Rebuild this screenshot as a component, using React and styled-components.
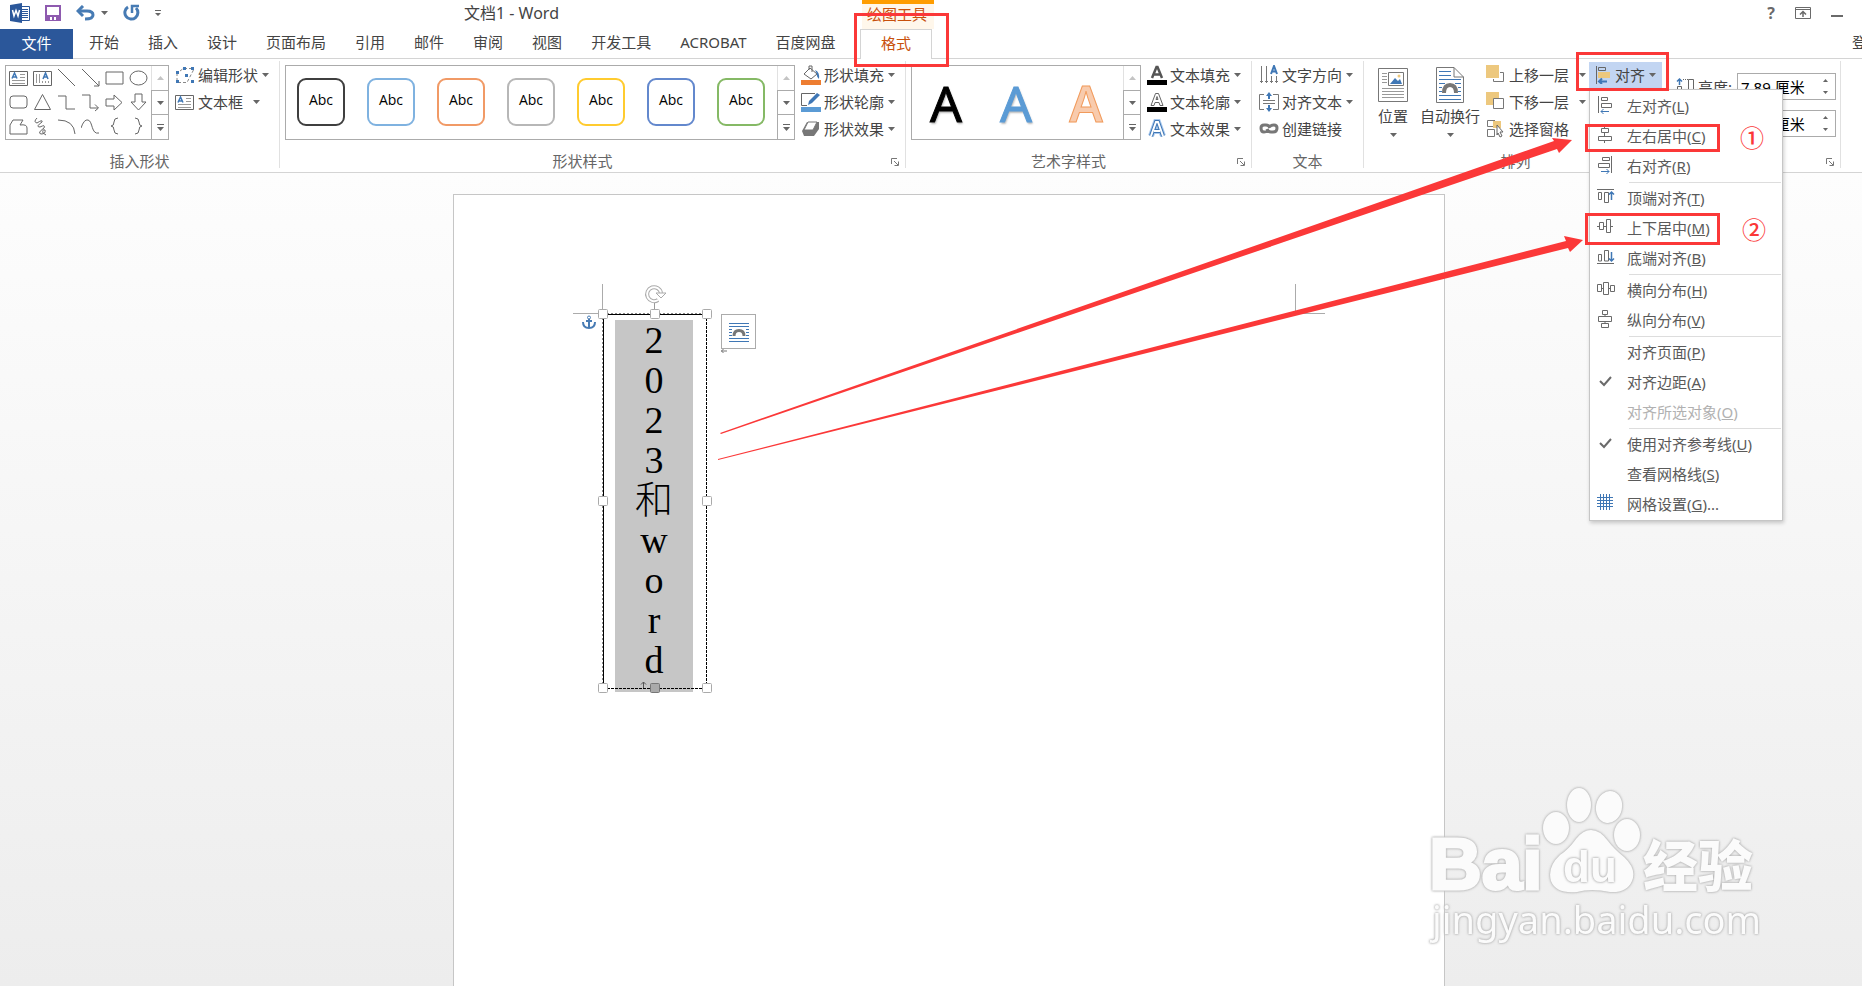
import React from "react";
import styled, { createGlobalStyle } from "styled-components";

const RED = "#fb3838";

const tabs = [
  "开始",
  "插入",
  "设计",
  "页面布局",
  "引用",
  "邮件",
  "审阅",
  "视图",
  "开发工具",
  "ACROBAT",
  "百度网盘",
];

const shapeStyles = [
  "#3f3f3f",
  "#7fb2e0",
  "#f19a66",
  "#b7b7b7",
  "#ffcb2f",
  "#6388cd",
  "#85b965",
];

const shapes = [
  { name: "横排文本框", kind: "textH" },
  { name: "竖排文本框", kind: "textV" },
  { name: "直线", d: "M1 0 L18 17" },
  { name: "箭头", d: "M1 0 L18 17 M18 12 V17 H13" },
  { name: "矩形", d: "M1 3 H18 V15 H1 Z" },
  { name: "椭圆", d: "M1 9 A8.5 7 0 0 1 18 9 A8.5 7 0 0 1 1 9 Z" },
  { name: "圆角矩形", d: "M4 3 H15 Q18 3 18 6 V12 Q18 15 15 15 H4 Q1 15 1 12 V6 Q1 3 4 3 Z" },
  { name: "三角形", d: "M9.5 1.5 L17.5 16.5 H1.5 Z" },
  { name: "肘形连接符", d: "M1 3 H9 V16 H18" },
  { name: "肘形箭头", d: "M1 2 H9 V15 H17 M14 11.5 L17.5 15 L14 18" },
  { name: "右箭头", d: "M1 6 H9 V2 L17 9.5 L9 17 V13 H1 Z" },
  { name: "下箭头", d: "M6 1 H13 V9 H17 L9.5 17 L2 9 H6 Z" },
  { name: "任意多边形", d: "M4 3 H14 L11 8 Q18 7 18 11 V17 H1 V8 Z" },
  { name: "自由曲线", d: "M4 1 Q0 5 4 6 Q10 2 9 5 Q2 10 7 10 Q13 7 11 11 Q4 16 8 17 Q13 17 12 13 Q9 12 10 16 L13 18" },
  { name: "弧形", d: "M1 3 Q17 3 18 17" },
  { name: "曲线", d: "M0 11 Q3 2 7 3 C12 4 10 18 18 16" },
  { name: "左大括号", d: "M13 1 Q9 1 9 5 Q9 9 6 9 Q9 9 9 13 Q9 17 13 17" },
  { name: "右大括号", d: "M6 1 Q10 1 10 5 Q10 9 13 9 Q10 9 10 13 Q10 17 6 17" },
];

const menuItems = [
  { text: "左对齐", hot: "L", icon: "left" },
  { text: "左右居中", hot: "C", icon: "center" },
  { text: "右对齐", hot: "R", icon: "right" },
  null,
  { text: "顶端对齐", hot: "T", icon: "top" },
  { text: "上下居中", hot: "M", icon: "middle" },
  { text: "底端对齐", hot: "B", icon: "bottom" },
  null,
  { text: "横向分布", hot: "H", icon: "distH" },
  { text: "纵向分布", hot: "V", icon: "distV" },
  null,
  { text: "对齐页面", hot: "P" },
  { text: "对齐边距", hot: "A", icon: "check" },
  { text: "对齐所选对象", hot: "O", disabled: true },
  null,
  { text: "使用对齐参考线", hot: "U", icon: "check" },
  { text: "查看网格线", hot: "S" },
  { text: "网格设置", hot: "G", tail: "...", icon: "grid" },
];

const menuIcons = {
  left: (
    <>
      <path d="M1.5 0 V17 M4.5 1.5 H10.5 V4.5 H4.5 Z M4.5 7.5 H14.5 V11.5 H4.5 Z" />
      <path className="blue" d="M12 15.5 H4 M6.5 13 L4 15.5 L6.5 18" />
    </>
  ),
  center: (
    <path d="M7.5 0 V2 M4.5 2.5 H11.5 V6.5 H4.5 Z M7.5 7 V10 M1.5 10.5 H14.5 V14.5 H1.5 Z M7.5 15 V17" />
  ),
  right: (
    <>
      <path d="M14.5 0 V17 M5.5 1.5 H12.5 V4.5 H5.5 Z M1.5 7.5 H12.5 V11.5 H1.5 Z" />
      <path className="blue" d="M4 15.5 H12 M9.5 13 L12 15.5 L9.5 18" />
    </>
  ),
  top: (
    <>
      <path d="M0 1.5 H17 M1.5 4.5 H4.5 V11.5 H1.5 Z M7.5 4.5 H11.5 V14.5 H7.5 Z" />
      <path className="blue" strokeWidth="1.5" d="M14.5 12 V4 M12 6.5 L14.5 4 L17 6.5" />
    </>
  ),
  middle: (
    <path d="M0 8.5 H2 M2.5 4.5 H6.5 V11.5 H2.5 Z M7 8.5 H9 M9.5 1.5 H13.5 V14.5 H9.5 Z M14 8.5 H16" />
  ),
  bottom: (
    <>
      <path d="M0 15.5 H17 M1.5 6.5 H4.5 V13 H1.5 Z M7.5 2.5 H11.5 V13 H7.5 Z" />
      <path className="blue" strokeWidth="1.5" d="M14.5 4 V13 M12 10.5 L14.5 13 L17 10.5" />
    </>
  ),
  distH: (
    <path d="M0.5 4.5 H4.5 V11.5 H0.5 Z M4.5 8.5 H6.5 M6.5 2.5 H11.5 V14.5 H6.5 Z M11.5 8.5 H13.5 M13.5 5.5 H17.5 V11.5 H13.5 Z" />
  ),
  distV: (
    <path d="M5.5 0.5 H10.5 V4.5 H5.5 Z M8 4.5 V6.5 M1.5 6.5 H14.5 V11.5 H1.5 Z M8 11.5 V13.5 M4.5 13.5 H11.5 V17.5 H4.5 Z" />
  ),
  check: <path d="M3 9 L7 13 L14 5" strokeWidth="2" />,
  grid: (
    <path
      className="blue"
      d="M3.5 0 V16 M6.5 0 V16 M9.5 0 V16 M12.5 0 V16 M0 3.5 H16 M0 6.5 H16 M0 9.5 H16 M0 12.5 H16"
    />
  ),
};

function Caret() {
  return (
    <CaretIcon viewBox="0 0 7 4" aria-hidden="true">
      <path d="M0 0 H7 L3.5 4 Z" />
    </CaretIcon>
  );
}

function Launcher() {
  return (
    <LauncherButton aria-label="更多选项">
      <svg width="8" height="8" viewBox="0 0 8 8" fill="none" stroke="#777">
        <path d="M0.5 6 V0.5 H6" />
        <path d="M3 3 L7 7 M7.5 3.5 V7.5 H3.5" />
      </svg>
    </LauncherButton>
  );
}

function GalleryScroll() {
  return (
    <ScrollColumn>
      <ScrollButton aria-label="上一行" $faded>
        <svg width="7" height="4" viewBox="0 0 7 4">
          <path d="M0 4 H7 L3.5 0 Z" fill="#c4c4c4" />
        </svg>
      </ScrollButton>
      <ScrollButton aria-label="下一行">
        <Caret />
      </ScrollButton>
      <ScrollButton aria-label="其他">
        <svg width="7" height="7" viewBox="0 0 7 7" fill="#666">
          <path d="M0 0 H7 V1 H0 Z M0 3 H7 L3.5 7 Z" />
        </svg>
      </ScrollButton>
    </ScrollColumn>
  );
}

function Command({ icon, children, caret, split }) {
  return (
    <CommandButton $split={split}>
      <svg width="20" height="20" viewBox="0 0 20 20" fill="none">
        {icon}
      </svg>
      <span>{children}</span>
      {caret && <Caret />}
    </CommandButton>
  );
}

function RibbonGroup({ width, label, launcher, pad = 5, children }) {
  return (
    <Group $width={width}>
      <GroupBody $pad={pad}>{children}</GroupBody>
      <GroupFooter $launcher={launcher}>
        <span>{label}</span>
        {launcher && <Launcher />}
      </GroupFooter>
    </Group>
  );
}

function ShapeIcon({ shape }) {
  if (shape.kind) {
    const vertical = shape.kind === "textV";
    return (
      <svg width="19" height="18" viewBox="0 0 19 18" fill="none" stroke="#666">
        <path d="M0.5 2.5 H18.5 V16.5 H0.5 Z" />
        <path
          stroke="#999"
          d={
            vertical
              ? "M3.5 5 V14 M6.5 5 V14 M9.5 12 V14 M12.5 12 V14 M15.5 12 V14"
              : "M11 5.5 H16 M11 8.5 H16 M3 11.5 H16 M3 14.5 H16"
          }
        />
        <path
          stroke="#3f77b5"
          strokeWidth="1.5"
          d={vertical ? "M10 10 L12.5 4 L15 10 M11 8 H14" : "M3 9.5 L5.5 4 L8 9.5 M4 8 H7"}
        />
      </svg>
    );
  }
  return (
    <svg width="19" height="19" viewBox="0 0 19 19" fill="none" stroke="#666">
      <path d={shape.d} />
    </svg>
  );
}

function AlignMenu() {
  return (
    <Menu role="menu">
      {menuItems.map((item, i) =>
        item ? (
          <MenuItem key={item.hot} role="menuitem" disabled={item.disabled}>
            <svg width="18" height="18" viewBox="0 0 18 18" fill="none" stroke="#6a6a6a">
              {menuIcons[item.icon]}
            </svg>
            <span>
              {item.text}(<u>{item.hot}</u>){item.tail}
            </span>
          </MenuItem>
        ) : (
          <MenuLine key={i} />
        )
      )}
    </Menu>
  );
}

function SizeField({ name, value, children }) {
  return (
    <Spinner>
      {children}
      <input id={name} aria-label={name} defaultValue={value} />
      <div>
        <button aria-label="增大">
          <svg width="5" height="3" viewBox="0 0 5 3">
            <path d="M0 3 H5 L2.5 0 Z" fill="#666" />
          </svg>
        </button>
        <button aria-label="减小">
          <svg width="5" height="3" viewBox="0 0 5 3">
            <path d="M0 0 H5 L2.5 3 Z" fill="#666" />
          </svg>
        </button>
      </div>
    </Spinner>
  );
}

function TitleBar() {
  return (
    <TitleRow>
      <QuickAccess>
        <svg width="20" height="20" viewBox="0 0 20 20">
          <path d="M10 3.5 H19.5 V17.5 H10" fill="#fff" stroke="#2b579a" />
          <path d="M12 6.5 H18 M12 8.5 H18 M12 10.5 H18 M12 12.5 H18 M12 14.5 H18" stroke="#2b579a" />
          <path d="M0 2 L12 0 V20 L0 18 Z" fill="#2b579a" />
          <path d="M2.5 7 L4 13 L6 7.5 L8 13 L9.5 7" fill="none" stroke="#fff" strokeWidth="1.5" />
        </svg>
        <QuickButton aria-label="保存">
          <svg width="16" height="16" viewBox="0 0 16 16" fill="none" stroke="#8e5aaf" strokeWidth="2">
            <path d="M1 1 H15 V15 H1 Z" />
            <path d="M2 10 H14 V15 H2 Z" fill="#8e5aaf" stroke="none" />
            <path d="M5 12 H7 V15 H5 Z M9 12 H11 V15 H9 Z" fill="#fff" stroke="none" />
          </svg>
        </QuickButton>
        <QuickButton aria-label="撤消">
          <svg width="19" height="16" viewBox="0 0 19 16" fill="none" stroke="#477bb4" strokeWidth="3">
            <path d="M2 6 H11 Q17 6 17 10 Q17 14 9 14" />
            <path d="M7 1 L2 6 L7 11" />
          </svg>
          <Caret />
        </QuickButton>
        <QuickButton aria-label="重复">
          <svg width="17" height="17" viewBox="0 0 17 17" fill="none" stroke="#477bb4" strokeWidth="3">
            <path d="M5 3 A6.5 6.5 0 1 0 13 4" />
            <path d="M9 9 V2 H16" strokeWidth="2.5" />
          </svg>
        </QuickButton>
        <QuickButton aria-label="自定义快速访问工具栏">
          <svg width="6" height="6" viewBox="0 0 6 6" fill="#666">
            <path d="M0 0 H6 V1 H0 Z M0 3 H6 L3 6 Z" />
          </svg>
        </QuickButton>
      </QuickAccess>
      <DocTitle>文档1 - Word</DocTitle>
      <ToolContext>绘图工具</ToolContext>
      <WindowButtons>
        <button aria-label="帮助">?</button>
        <button aria-label="功能区显示选项">
          <svg width="16" height="12" viewBox="0 0 16 12" fill="none" stroke="#6a6a6a">
            <path d="M0.5 0.5 H15.5 V11.5 H0.5 Z M1 2.5 H15" />
            <path d="M8 10 V5 M5 7.5 L8 4.5 L11 7.5" strokeWidth="1.5" />
          </svg>
        </button>
        <button aria-label="最小化">
          <svg width="12" height="12" viewBox="0 0 12 12">
            <path d="M0 8 H12 V10 H0 Z" fill="#6a6a6a" />
          </svg>
        </button>
      </WindowButtons>
    </TitleRow>
  );
}

function Ribbon() {
  return (
    <RibbonBar>
      <RibbonGroup width={280} label="插入形状">
        <Gallery $width={164}>
          <ShapeGrid>
            {shapes.map((shape) => (
              <button key={shape.name} aria-label={shape.name}>
                <ShapeIcon shape={shape} />
              </button>
            ))}
          </ShapeGrid>
          <GalleryScroll />
        </Gallery>
        <CommandColumn>
          <Command
            caret
            icon={
              <>
                <path d="M9 3.5 H18 M2 8 V18 M3 17.5 H12 L19 4 M5 6 L9 3" stroke="#888" strokeDasharray="3 2" />
                <path
                  d="M8 2 H11 V5 H8 Z M16 2 H19 V5 H16 Z M1 6 H4 V9 H1 Z M1 15 H4 V18 H1 Z M10 9 H13 V12 H10 Z M16 15 H19 V18 H16 Z"
                  fill="#3f77b5"
                />
              </>
            }
          >
            编辑形状
          </Command>
          <Command
            caret
            split
            icon={
              <>
                <path d="M0.5 3.5 H18.5 V17.5 H0.5 Z" stroke="#666" />
                <path d="M11 6.5 H16 M11 9.5 H16 M3 12.5 H16 M3 15.5 H16" stroke="#999" />
                <path d="M3 10.5 L5.5 5 L8 10.5 M4 9 H7" stroke="#3f77b5" strokeWidth="1.5" />
              </>
            }
          >
            文本框
          </Command>
        </CommandColumn>
      </RibbonGroup>

      <RibbonGroup width={626} label="形状样式" launcher>
        <Gallery $width={510}>
          <StyleRow>
            {shapeStyles.map((color) => (
              <StyleTile key={color} $color={color}>
                Abc
              </StyleTile>
            ))}
          </StyleRow>
          <GalleryScroll />
        </Gallery>
        <CommandColumn>
          <Command
            caret
            icon={
              <>
                <path d="M0 15 H20 V20 H0 Z" fill="#ed7d31" />
                <path d="M9 3 L16 9 L10 14 L3 9 Z M8 5 V1 H11 V7" stroke="#666" />
                <path d="M14 5 Q19 7 18 14 Q15 11 16 9 Z" fill="#3f77b5" />
              </>
            }
          >
            形状填充
          </Command>
          <Command
            caret
            icon={
              <>
                <path d="M0 15 H20 V20 H0 Z" fill="#5b9bd5" />
                <path d="M14 1.5 H0.5 V13.5 H6" stroke="#666" />
                <path d="M7 13 L8 9 L16 1 L19 3 L11 11 Z" fill="#3f77b5" />
              </>
            }
          >
            形状轮廓
          </Command>
          <Command
            caret
            icon={
              <>
                <path d="M1 12 L6 3 H18 V10 L13 17 H3 Z" fill="#777" />
                <path d="M7 3 H16 L12 11 H3 Z" fill="#fff" stroke="#777" />
              </>
            }
          >
            形状效果
          </Command>
        </CommandColumn>
      </RibbonGroup>

      <RibbonGroup width={346} label="艺术字样式" launcher>
        <Gallery $width={230}>
          <WordArtRow>
            <WordArt $color="#000">A</WordArt>
            <WordArt $color="#5b9bd5">A</WordArt>
            <WordArt $color="#f8cbad" $outline="#f19a5b">
              A
            </WordArt>
          </WordArtRow>
          <GalleryScroll />
        </Gallery>
        <CommandColumn>
          <Command
            caret
            icon={
              <>
                <path d="M0 15 H20 V20 H0 Z" fill="#000" />
                <path d="M5 13 L9.5 2 H10.5 L15 13 M6.5 9.5 H13.5" stroke="#555" strokeWidth="2.5" />
              </>
            }
          >
            文本填充
          </Command>
          <Command
            caret
            icon={
              <>
                <path d="M0 15 H20 V20 H0 Z" fill="#000" />
                <path d="M4 13.5 L8.5 1.5 H11.5 L16 13.5 H13 L12 10.5 H8 L7 13.5 Z M9 7.5 L10 4.5 L11 7.5 Z" stroke="#666" />
              </>
            }
          >
            文本轮廓
          </Command>
          <Command
            caret
            icon={
              <>
                <path d="M4 17 L9 3 H11 L16 17 M7 12 H13" stroke="#a9c9ee" strokeWidth="6" />
                <path d="M4 17 L9 3 H11 L16 17 M7 12 H13" stroke="#3f77b5" strokeWidth="4" />
                <path d="M4 17 L9 3 H11 L16 17 M7 12 H13" stroke="#fff" strokeWidth="2" />
              </>
            }
          >
            文本效果
          </Command>
        </CommandColumn>
      </RibbonGroup>

      <RibbonGroup width={112} label="文本" pad={7}>
        <CommandColumn>
          <Command
            caret
            icon={
              <>
                <path d="M2.5 1 V18 M7.5 1 V18 M12.5 11 V18 M17.5 11 V18" stroke="#777" />
                <path d="M1 16.5 H4 M6 16.5 H9 M11 16.5 H14 M16 16.5 H19" stroke="#777" />
                <path d="M12 9 L15 1 L18 9 M13 6.5 H17" stroke="#3f77b5" strokeWidth="2" />
              </>
            }
          >
            文字方向
          </Command>
          <Command
            caret
            icon={
              <>
                <path d="M5 2.5 H0.5 V17.5 H5 M14 2.5 H19.5 V17.5 H14 M4 8.5 H16 M4 11.5 H16" stroke="#777" />
                <path d="M10 0 L13 4 H11 V7 H9 V4 H7 Z M10 20 L13 16 H11 V13 H9 V16 H7 Z" fill="#3f77b5" />
              </>
            }
          >
            对齐文本
          </Command>
          <Command
            icon={
              <path
                d="M9 12 Q7 13 5 13 Q2 13 2 9 Q2 6 5 6 H7 Q10 6 11 9 M11 7 Q13 6 15 6 Q18 6 18 9 Q18 13 14 13 H12 Q9 13 8 10"
                stroke="#777"
                strokeWidth="3"
              />
            }
          >
            创建链接
          </Command>
        </CommandColumn>
      </RibbonGroup>

      <RibbonGroup width={304} label="排列" pad={14}>
        <BigButtons>
          <BigButton>
            <svg width="30" height="36" viewBox="0 0 30 36" fill="none" stroke="#777">
              <path d="M0.5 1.5 H29.5 V34.5 H0.5 Z M10.5 5.5 H25.5 V18.5 H10.5 Z" />
              <path d="M4 6.5 H9 M4 9.5 H9 M4 12.5 H9 M4 15.5 H9 M4 21.5 H26 M4 24.5 H26 M4 27.5 H26 M4 30.5 H26" stroke="#999" />
              <path d="M12 17 L17 11 L20 14 L22 12 L24 17 Z" fill="#3f77b5" stroke="none" />
              <circle cx="21" cy="9" r="1.5" fill="#edc87e" stroke="none" />
            </svg>
            <span>位置</span>
            <Caret />
          </BigButton>
          <BigButton>
            <svg width="28" height="36" viewBox="0 0 28 36" fill="none" stroke="#777">
              <path d="M0.5 0.5 H18 L27.5 10 V35.5 H0.5 Z M18 0.5 V10 H27.5" />
              <path d="M3 4.5 H15 M3 8.5 H15 M3 12.5 H25 M3 16.5 H9 M19 16.5 H25 M3 20.5 H6 M22 20.5 H25 M3 24.5 H6 M22 24.5 H25 M3 28.5 H25 M3 32.5 H25" stroke="#3f77b5" />
              <path d="M8 26 Q8 18 14 18 Q20 18 20 26" strokeWidth="4" />
            </svg>
            <span>自动换行</span>
            <Caret />
          </BigButton>
        </BigButtons>
        <CommandColumn>
          <Command
            caret
            split
            icon={
              <>
                <path d="M17.5 7.5 V16.5 H7.5 V14 M14 7.5 H17.5" stroke="#777" />
                <path d="M0 0 H13 V13 H0 Z" fill="#edc87e" />
              </>
            }
          >
            上移一层
          </Command>
          <Command
            caret
            split
            icon={
              <>
                <path d="M0 0 H13 V13 H0 Z" fill="#edc87e" />
                <path d="M7.5 6.5 H17.5 V16.5 H7.5 Z" fill="#fff" stroke="#777" />
              </>
            }
          >
            下移一层
          </Command>
          <Command
            icon={
              <>
                <path d="M7 2 H15 V9 H7 Z" fill="#edc87e" />
                <path d="M9 1.5 H1.5 V7.5 H7 M1.5 10.5 H8.5 V17.5 H1.5 Z" stroke="#777" />
                <path d="M11 6 L17 13 H14 L16 17 L14 18 L12 14 L11 16 Z" fill="#fff" stroke="#666" />
              </>
            }
          >
            选择窗格
          </Command>
        </CommandColumn>
        <AlignHolder>
          <AlignButton aria-haspopup="menu">
            <svg width="16" height="18" viewBox="0 0 16 18" fill="none" stroke="#666">
              <path d="M1.5 0 V18 M3.5 1.5 H10.5 V4.5 H3.5 Z" />
              <path d="M3 6 H15 V12 H3 Z" fill="#edc87e" stroke="none" />
              <path d="M12 15.5 H4 M7 12.5 L4 15.5 L7 18" stroke="#3f77b5" strokeWidth="2" />
            </svg>
            <span>对齐</span>
            <Caret />
          </AlignButton>
          <AlignMenu />
        </AlignHolder>
      </RibbonGroup>

      <RibbonGroup width={173} launcher pad={8}>
        <SizeColumn>
          <SizeField name="高度" value="7.89 厘米">
            <svg width="20" height="20" viewBox="0 0 20 20" fill="none" stroke="#666">
              <path d="M1.5 9.5 H5.5 V13.5 H1.5 Z M12.5 2.5 H17.5 V18.5 H12.5 Z" />
              <path strokeDasharray="1 1" d="M7 2.5 H12 M3.5 14 V20" />
              <path stroke="#3f77b5" strokeWidth="1.5" d="M3.5 8 V2 M1 4.5 L3.5 2 L6 4.5" />
            </svg>
            <label htmlFor="高度">高度:</label>
          </SizeField>
          <SizeField name="宽度" value="2.61 厘米" />
        </SizeColumn>
      </RibbonGroup>
    </RibbonBar>
  );
}

function TextBox() {
  const handles = [
    [14, 34],
    [66, 34],
    [118, 34],
    [14, 221],
    [118, 221],
    [14, 408],
    [66, 408],
    [118, 408],
  ];
  return (
    <BoxNode>
      <VerticalText>
        {"2023和word".split("").map((ch, i) => (
          <span key={i}>{ch}</span>
        ))}
      </VerticalText>
      <svg width="200" height="420" viewBox="0 0 200 420" fill="none">
        <path d="M14.5 34.5 V408 M14 34.5 H118" stroke="#000" />
        <path d="M13.5 34 V408 M14 33.5 H118" stroke="#888" strokeDasharray="2 2" />
        <path d="M117.5 34 V408 M14 408.5 H118" stroke="#000" strokeDasharray="3 1" />
        <path d="M65.5 21 V30" stroke="#999" />
        <path d="M69 20 A7 7 0 1 1 72 13" stroke="#aaa" strokeWidth="4" />
        <path d="M69 20 A7 7 0 1 1 72 13" stroke="#fff" strokeWidth="2" />
        <path d="M67 13 H77 L72 18 Z" fill="#fff" stroke="#aaa" />
        {handles.map(([x, y], i) => (
          <rect
            key={i}
            x={x - 4.5}
            y={y - 4.5}
            width="9"
            height="9"
            rx="1"
            fill={i === 6 ? "#aaa" : "#fff"}
            stroke={i === 6 ? "#777" : "#aaa"}
          />
        ))}
        <path d="M54.5 408 V402 M52 404.5 L54.5 402 L57 404.5" stroke="#555" />
        <path d="M132 71 H138 M134.5 69 L132.5 71 L134.5 73" stroke="#777" />
      </svg>
      <AnchorIcon width="14" height="15" viewBox="0 0 14 15" fill="none" stroke="#477bb4" strokeWidth="2">
        <circle cx="7" cy="2.5" r="1.5" strokeWidth="1" />
        <path d="M7 4 V13 M4 6 H10 M1 7 Q1 13 7 13 Q13 13 13 7" />
      </AnchorIcon>
      <LayoutButton aria-label="布局选项">
        <svg width="20" height="20" viewBox="0 0 20 20" fill="none" stroke="#3f77b5">
          <path d="M0 1.5 H20 M0 4.5 H20 M0 7.5 H3 M17 7.5 H20 M0 10.5 H3 M17 10.5 H20 M0 13.5 H3 M17 13.5 H20 M0 16.5 H20 M0 19.5 H20" />
          <path d="M5 14 Q5 8.5 10 8.5 Q15 8.5 15 14" stroke="#777" strokeWidth="3" />
        </svg>
      </LayoutButton>
    </BoxNode>
  );
}

function Watermark() {
  return (
    <WatermarkArt width="340" height="180" viewBox="0 0 340 180">
      <g>
        <ellipse cx="136" cy="48" rx="13" ry="16" />
        <ellipse cx="159" cy="25" rx="12" ry="17" />
        <ellipse cx="189" cy="27" rx="13" ry="16" transform="rotate(12 189 27)" />
        <ellipse cx="207" cy="55" rx="13" ry="16" />
        <path d="M171 50 Q180 50 188 61 Q194 69 204 77 Q217 89 212 101 Q207 113 190 112 Q171 108 157 112 Q136 114 131 101 Q127 87 140 75 Q149 69 156 59 Q163 50 171 50 Z" />
      </g>
      <BrandText x="9" y="109" $size={73}>
        Bai
      </BrandText>
      <BrandText x="143" y="102" $size={44}>
        du
      </BrandText>
      <BrandText x="223" y="106" $size={55}>
        经验
      </BrandText>
      <SiteText x="12" y="154">
        jingyan.baidu.com
      </SiteText>
    </WatermarkArt>
  );
}

function Annotations() {
  return (
    <Overlay>
      <svg width="1862" height="500" viewBox="0 0 1862 500" fill={RED}>
        <path d="M720 433 L1554 141 L1552 138 L1572 140 L1559 153 L1557 149 L721 434 Z" />
        <path d="M718 459 L1566 241 L1564 236 L1583 240 L1570 252 L1568 248 L718 460 Z" />
      </svg>
      <Mark $x={854} $y={13} $w={95} $h={54} />
      <Mark $x={1576} $y={52} $w={93} $h={39} />
      <Mark $x={1585} $y={124} $w={135} $h={28} />
      <Mark $x={1585} $y={213} $w={135} $h={32} />
      <Step $x={1740} $y={125}>
        ①
      </Step>
      <Step $x={1742} $y={217}>
        ②
      </Step>
    </Overlay>
  );
}

function App() {
  return (
    <Screen>
      <GlobalStyle />
      <TitleBar />
      <TabRow>
        <TabList>
          <FileTab>文件</FileTab>
          {tabs.map((tab) => (
            <Tab key={tab}>{tab}</Tab>
          ))}
        </TabList>
        <ActiveTab>格式</ActiveTab>
        <SignIn href="#">登录</SignIn>
      </TabRow>
      <Ribbon />
      <Workspace>
        <Paper>
          <Corner $left={119} $side="right" />
          <Corner $left={841} $side="left" />
          <TextBox />
        </Paper>
        <Watermark />
      </Workspace>
      <Annotations />
    </Screen>
  );
}

export default App;

const GlobalStyle = createGlobalStyle`
  * {
    box-sizing: border-box;
  }
  body {
    margin: 0;
    overflow: hidden;
  }
  body, button, input {
    font-family: "Noto Sans", "Noto Sans CJK SC", sans-serif;
    font-size: 15px;
    color: #444444;
  }
  button {
    padding: 0;
    border: none;
    background: none;
    white-space: nowrap;
  }
  svg {
    display: block;
    flex: none;
  }
`;

const Screen = styled.div`
  position: relative;
  display: flex;
  flex-direction: column;
  height: 100vh;
  overflow: hidden;
  background-color: #ffffff;
`;

const TitleRow = styled.header`
  display: flex;
  height: 29px;
`;

const QuickAccess = styled.div`
  flex: 0 0 159px;
  display: flex;
  align-items: center;
  gap: 15px;
  padding: 0 0 4px 10px;
`;

const QuickButton = styled.button`
  display: flex;
  align-items: center;
  gap: 6px;
`;

const DocTitle = styled.div`
  flex: 0 0 701px;
  text-align: center;
  font-size: 16px;
  line-height: 26px;
`;

const ToolContext = styled.div`
  width: 72px;
  padding-left: 5px;
  border-top: 4px solid #ff9d00;
  background-color: #fff7eb;
  color: #c8500b;
  line-height: 20px;
`;

const WindowButtons = styled.div`
  display: flex;
  align-items: center;
  gap: 20px;
  margin-left: auto;
  padding: 0 19px 4px 0;
  button {
    font-weight: 700;
    font-size: 16px;
    color: #6a6a6a;
  }
`;

const TabRow = styled.div`
  display: flex;
  height: 30px;
  border-bottom: 1px solid #d4d4d4;
`;

const TabList = styled.nav`
  flex: 0 0 860px;
  display: flex;
  gap: 29px;
`;

const Tab = styled.button`
  padding-bottom: 4px;
`;

const FileTab = styled(Tab)`
  width: 73px;
  height: 30px;
  margin-right: -13px;
  background-color: #2b579a;
  color: #ffffff;
`;

const ActiveTab = styled(Tab)`
  width: 72px;
  height: 30px;
  border: 1px solid #d4d4d4;
  border-bottom: none;
  background-color: #ffffff;
  color: #c8500b;
`;

const SignIn = styled.a`
  margin-left: auto;
  width: 10px;
  overflow: hidden;
  white-space: nowrap;
  line-height: 26px;
  color: #444444;
  text-decoration: none;
`;

const RibbonBar = styled.div`
  position: relative;
  z-index: 2;
  display: flex;
  height: 114px;
  border-bottom: 1px solid #d4d4d4;
  background-color: #ffffff;
`;

const Group = styled.section`
  flex: 0 0 ${(props) => props.$width}px;
  display: flex;
  flex-direction: column;
  margin: 2px 0 4px;
  border-right: 1px solid #e1e1e1;
`;

const GroupBody = styled.div`
  display: flex;
  align-items: flex-start;
  height: 90px;
  padding-left: ${(props) => props.$pad}px;
`;

const GroupFooter = styled.div`
  display: flex;
  align-items: center;
  height: 17px;
  padding: 3px ${(props) => (props.$launcher ? 6 : 0)}px 0 0;
  color: #666666;
  line-height: 14px;
  span {
    flex: 1;
    text-align: center;
    padding-right: ${(props) => (props.$launcher ? 6 : 0)}px;
  }
`;

const LauncherButton = styled.button`
  padding-top: 2px;
`;

const CaretIcon = styled.svg`
  width: 7px;
  height: 4px;
  fill: #666666;
`;

const Gallery = styled.div`
  display: flex;
  width: ${(props) => props.$width}px;
  height: 75px;
  margin-top: 4px;
  border: 1px solid #ababab;
`;

const ScrollColumn = styled.div`
  display: flex;
  flex-direction: column;
  width: 17px;
  margin-left: auto;
`;

const ScrollButton = styled.button`
  flex: 1;
  display: flex;
  align-items: center;
  justify-content: center;
  border-left: 1px solid ${(props) => (props.$faded ? "#e1e1e1" : "#ababab")};
  & + & {
    border-top: 1px solid #ababab;
  }
`;

const ShapeGrid = styled.div`
  display: grid;
  grid-template-columns: repeat(6, 24px);
  grid-template-rows: repeat(3, 24px);
  button {
    display: flex;
    align-items: center;
    justify-content: center;
  }
`;

const StyleRow = styled.div`
  display: flex;
  align-items: center;
  gap: 22px;
  padding: 0 0 2px 11px;
`;

const StyleTile = styled.button`
  width: 48px;
  height: 48px;
  border: 2px solid ${(props) => props.$color};
  border-radius: 9px;
  padding-bottom: 4px;
  font-family: "Open Sans", sans-serif;
  font-size: 14px;
  color: #000000;
`;

const WordArtRow = styled.div`
  display: flex;
  align-items: center;
`;

const WordArt = styled.button`
  width: 70px;
  padding-right: 2px;
  font-size: 50px;
  line-height: 60px;
  font-weight: ${(props) => (props.$outline ? 600 : 400)};
  color: ${(props) => props.$color};
  -webkit-text-stroke: 1px ${(props) => props.$outline || props.$color};
  text-shadow: ${(props) => (props.$outline ? "none" : "1px 2px 2px #bbbbbb")};
`;

const CommandColumn = styled.div`
  display: flex;
  flex-direction: column;
  align-items: flex-start;
  ${Gallery} + & {
    margin-left: 6px;
  }
`;

const CommandButton = styled.button`
  display: flex;
  align-items: center;
  height: 27px;
  svg + span {
    margin-left: 3px;
  }
  ${CaretIcon} {
    margin-left: ${(props) => (props.$split ? 10 : 4)}px;
  }
`;

const BigButtons = styled.div`
  display: flex;
  gap: 12px;
  padding: 6px 6px 0 0;
`;

const BigButton = styled.button`
  display: flex;
  flex-direction: column;
  align-items: center;
  span {
    line-height: 26px;
  }
  ${CaretIcon} {
    margin-top: 4px;
  }
`;

const AlignHolder = styled.div`
  position: relative;
  margin: 1px 0 0 3px;
`;

const AlignButton = styled.button`
  display: flex;
  align-items: center;
  gap: 4px;
  width: 73px;
  height: 27px;
  padding: 0 0 2px 6px;
  background-color: #c2d5f2;
`;

const Menu = styled.div`
  position: absolute;
  top: 27px;
  left: 0;
  z-index: 5;
  width: 194px;
  padding: 2px 1px 0;
  border: 1px solid #c6c6c6;
  background-color: #ffffff;
  box-shadow: 1px 2px 4px rgba(0, 0, 0, 0.2);
`;

const MenuItem = styled.button`
  display: flex;
  align-items: center;
  gap: 12px;
  width: 100%;
  height: 30px;
  padding: 0 0 4px 6px;
  color: ${(props) => (props.disabled ? "#b1b1b1" : "#5a5a5a")};
  .blue {
    stroke: #3f77b5;
  }
`;

const MenuLine = styled.div`
  height: 2px;
  margin-left: 38px;
  border-top: 1px solid #dddddd;
`;

const SizeColumn = styled.div`
  display: flex;
  flex-direction: column;
  align-items: flex-end;
  gap: 10px;
  width: 160px;
  padding-top: 12px;
`;

const Spinner = styled.div`
  display: flex;
  align-items: center;
  height: 27px;
  label {
    width: 39px;
    margin-left: 2px;
    white-space: nowrap;
  }
  input {
    width: 79px;
    height: 27px;
    border: 1px solid #ababab;
    border-right: none;
    padding: 0 0 0 3px;
    background: none;
    color: #000000;
  }
  div {
    display: flex;
    flex-direction: column;
    width: 20px;
    height: 27px;
    border: 1px solid #ababab;
    border-left: none;
  }
  button {
    flex: 1;
    display: flex;
    align-items: center;
    justify-content: center;
  }
`;

const Workspace = styled.main`
  position: relative;
  flex: 1;
  display: flex;
  justify-content: center;
  padding: 21px 0 0 36px;
  background: linear-gradient(#fdfdfd, #ededed);
`;

const Paper = styled.article`
  position: relative;
  width: 992px;
  border: 1px solid #c6c6c6;
  border-bottom: none;
  background-color: #ffffff;
`;

/* page margin corner mark */
const Corner = styled.div`
  position: absolute;
  top: 89px;
  left: ${(props) => props.$left}px;
  width: 30px;
  height: 30px;
  border-bottom: 1px solid #ababab;
  border-${(props) => props.$side}: 1px solid #ababab;
`;

const BoxNode = styled.div`
  position: absolute;
  left: 135px;
  top: 85px;
  width: 200px;
  height: 420px;
  & > svg {
    position: absolute;
    left: 0;
    top: 0;
  }
`;

const VerticalText = styled.div`
  position: absolute;
  left: 26px;
  top: 40px;
  width: 78px;
  height: 372px;
  display: flex;
  flex-direction: column;
  align-items: center;
  background-color: #c6c6c6;
  font-family: "Liberation Serif", "Noto Sans CJK SC", serif;
  font-weight: 300;
  font-size: 38px;
  line-height: 40px;
  color: #000000;
  span {
    height: 40px;
  }
`;

const AnchorIcon = styled.svg`
  && {
    position: absolute;
    left: -7px;
    top: 35px;
  }
`;

const LayoutButton = styled.button`
  position: absolute;
  left: 132px;
  top: 34px;
  width: 35px;
  height: 35px;
  display: flex;
  align-items: center;
  justify-content: center;
  border: 1px solid #ababab;
  background-color: #ffffff;
`;

const WatermarkArt = styled.svg`
  position: absolute;
  right: 102px;
  bottom: 26px;
  fill: #fbfbfb;
  g,
  text {
    filter: drop-shadow(0 0 1px #aaaaaa) drop-shadow(0 0 1px #d0d0d0);
  }
`;

const BrandText = styled.text`
  font-family: "Liberation Sans", "Noto Sans CJK SC", sans-serif;
  font-weight: 900;
  font-size: ${(props) => props.$size}px;
  stroke: #fbfbfb;
  stroke-width: ${(props) => (props.$size > 60 ? 3 : 0)}px;
`;

const SiteText = styled.text`
  font-size: 38px;
`;

const Overlay = styled.div`
  position: absolute;
  left: 0;
  top: 0;
  z-index: 10;
  pointer-events: none;
`;

const Mark = styled.div`
  position: absolute;
  left: ${(props) => props.$x}px;
  top: ${(props) => props.$y}px;
  width: ${(props) => props.$w}px;
  height: ${(props) => props.$h}px;
  border: 3px solid ${RED};
`;

const Step = styled.span`
  position: absolute;
  left: ${(props) => props.$x}px;
  top: ${(props) => props.$y}px;
  font-family: "Noto Sans CJK SC", sans-serif;
  font-weight: 500;
  font-size: 24px;
  line-height: 24px;
  color: ${RED};
`;
